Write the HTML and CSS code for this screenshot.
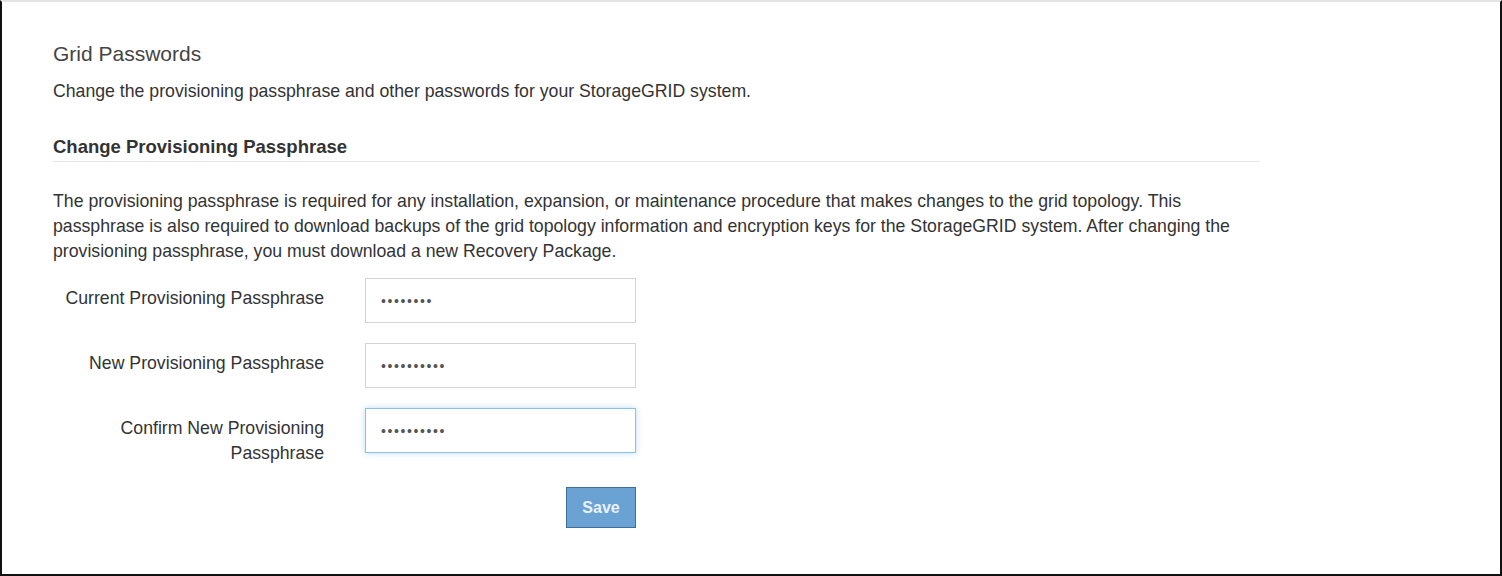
FILE: index.html
```html
<!DOCTYPE html>
<html lang="en">
<head>
<meta charset="utf-8">
<title>Grid Passwords</title>
<link rel="stylesheet" href="styles.css">
</head>
<body>
<div class="frame">
  <div class="page">
    <h1 class="page-title">Grid Passwords</h1>
    <p class="intro">Change the provisioning passphrase and other passwords for your StorageGRID system.</p>
    <h2 class="section-title">Change Provisioning Passphrase</h2>
    <p class="info">The provisioning passphrase is required for any installation, expansion, or maintenance procedure that makes changes to the grid topology. This passphrase is also required to download backups of the grid topology information and encryption keys for the StorageGRID system. After changing the provisioning passphrase, you must download a new Recovery Package.</p>
    <form class="form">
      <div class="row">
        <label class="label" for="cur">Current Provisioning Passphrase</label>
        <input class="input" id="cur" type="password" value="12345678">
      </div>
      <div class="row">
        <label class="label" for="new">New Provisioning Passphrase</label>
        <input class="input" id="new" type="password" value="1234567890">
      </div>
      <div class="row">
        <label class="label" for="conf">Confirm New Provisioning Passphrase</label>
        <input class="input focused" id="conf" type="password" value="1234567890">
      </div>
      <div class="row">
        <span class="label"></span>
        <div class="actions"><button type="button" class="btn">Save</button></div>
      </div>
    </form>
  </div>
</div>
</body>
</html>
```

FILE: styles.css
```css
html, body {
  margin: 0;
  padding: 0;
  background: #fff;
}
body {
  font-family: "Liberation Sans", Arial, sans-serif;
  color: #333;
  font-size: 17.7px;
}
.frame {
  box-sizing: border-box;
  width: 1502px;
  height: 576px;
  border-left: 2px solid #111;
  border-right: 2px solid #111;
  border-bottom: 2px solid #111;
  border-top: 2px solid #e4e4e4;
  overflow: hidden;
}
.page {
  padding: 0 0 0 51px;
  width: 1207px;
}
.page-title {
  margin: 40px 0 0;
  font-size: 21px;
  font-weight: normal;
  line-height: 24px;
  color: #444;
}
.intro {
  margin: 13px 0 0;
  line-height: 24px;
}
.section-title {
  margin: 32px 0 0;
  font-size: 18.5px;
  font-weight: bold;
  line-height: 24px;
  padding-bottom: 2px;
  border-bottom: 1px solid #e5e5e5;
  color: #333;
}
.info {
  margin: 27px 0 0;
  line-height: 25px;
}
.form {
  margin-top: 14px;
  display: flex;
  flex-direction: column;
  gap: 20px;
}
.row {
  display: grid;
  grid-template-columns: 271px 271px;
  column-gap: 41px;
  align-items: start;
}
.label {
  text-align: right;
  line-height: 25px;
  padding-top: 8px;
  color: #333;
}
.input {
  box-sizing: border-box;
  height: 45px;
  width: 271px;
  border: 1px solid #d4d4d4;
  background: #fff;
  padding: 0 15px;
  font-family: "Liberation Sans", Arial, sans-serif;
  font-size: 14px;
  letter-spacing: 1.6px;
  color: #555;
  outline: none;
  margin: 0;
}
.input.focused {
  border: 1px solid #8cc0e8;
  box-shadow: 0 0 6px rgba(102, 175, 233, 0.45);
}
.actions {
  display: flex;
  justify-content: flex-end;
}
.btn {
  box-sizing: border-box;
  width: 70px;
  height: 41px;
  background: #69a2d3;
  border: 1px solid #3e6f9c;
  color: #e9f2fa;
  font-family: "Liberation Sans", Arial, sans-serif;
  font-size: 16px;
  font-weight: bold;
  padding: 0;
  margin-top: 1px;
  border-radius: 0;
}
```
